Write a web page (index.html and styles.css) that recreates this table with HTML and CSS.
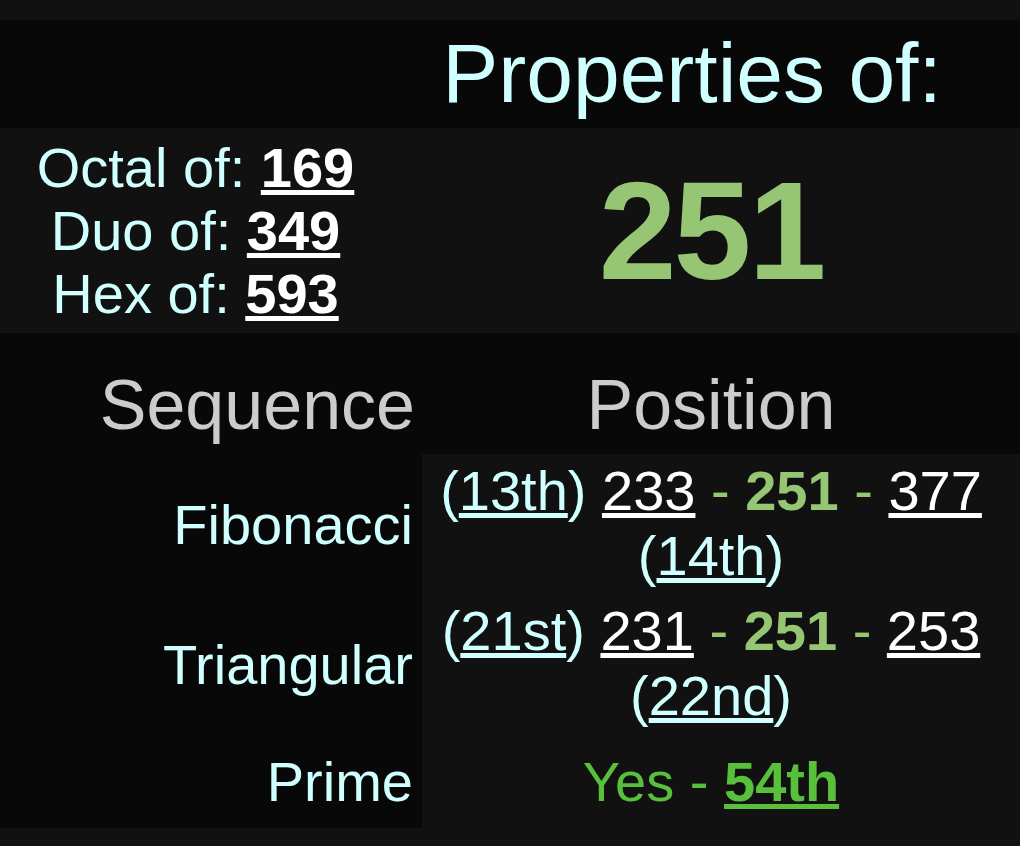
FILE: index.html
```html
<!DOCTYPE html>
<html>
<head>
<meta charset="utf-8">
<title>Properties of 251</title>
<link rel="stylesheet" href="styles.css">
</head>
<body>
<table class="props">
  <colgroup><col class="c1"><col class="c2"></colgroup>
  <tr class="title">
    <td></td>
    <td class="title-cell">Properties of:</td>
  </tr>
  <tr class="main">
    <td class="bases">Octal of: <a href="#">169</a><br>Duo of: <a href="#">349</a><br>Hex of: <a href="#">593</a></td>
    <td class="big">251</td>
  </tr>
  <tr class="head">
    <th class="seq-h">Sequence</th>
    <th class="pos-h">Position</th>
  </tr>
  <tr class="seq">
    <td class="label">Fibonacci</td>
    <td class="pos">(<a class="ord" href="#">13th</a>) <a class="n" href="#">233</a> <span class="g">- <b>251</b> -</span> <a class="n" href="#">377</a> (<a class="ord" href="#">14th</a>)</td>
  </tr>
  <tr class="seq">
    <td class="label">Triangular</td>
    <td class="pos">(<a class="ord" href="#">21st</a>) <a class="n" href="#">231</a> <span class="g">- <b>251</b> -</span> <a class="n" href="#">253</a> (<a class="ord" href="#">22nd</a>)</td>
  </tr>
  <tr class="seq prime">
    <td class="label">Prime</td>
    <td class="pos yes">Yes - <a class="yes-n" href="#">54th</a></td>
  </tr>
</table>
</body>
</html>
```
FILE: styles.css
```css
body {
  margin: 0;
  background: #111111;
  font-family: "Liberation Sans", Arial, sans-serif;
  color: #d0ffff;
}

.props {
  margin-top: 20px;
  width: 1020px;
  border-collapse: collapse;
  border-spacing: 0;
  table-layout: fixed;
}

.c1 {
  width: 422px;
}

.props td,
.props th {
  padding: 0;
  line-height: normal;
}

.props a {
  color: #ffffff;
  text-decoration: underline;
}

.title td {
  background: #080808;
  padding: 5px 0 6px;
}

.props .title-cell {
  font-size: 84px;
  text-align: center;
  padding-right: 58px;
}

.props .bases {
  font-size: 56px;
  line-height: 63px;
  text-align: center;
  vertical-align: middle;
  padding: 8px 31px 8px 0;
}

.bases a {
  font-weight: bold;
}

.props .big {
  font-size: 140px;
  font-weight: bold;
  color: #96c574;
  text-align: center;
  vertical-align: middle;
  padding-right: 20px;
  letter-spacing: -3px;
}

.head th {
  background: #080808;
  font-size: 70px;
  font-weight: normal;
  color: #cccccc;
}

.props .head th {
  padding-top: 32px;
  padding-bottom: 9px;
}

.props .seq-h {
  text-align: right;
  padding-right: 7px;
}

.props .pos-h {
  text-align: center;
  padding-right: 20px;
}

.seq td {
  font-size: 56px;
}

.props .label {
  background: #080808;
  text-align: right;
  vertical-align: middle;
  padding-right: 9px;
}

.props .pos {
  text-align: center;
  vertical-align: middle;
  padding: 4px 20px 6px 0;
}

.props a.ord {
  color: #d0ffff;
}

.g {
  color: #96c574;
}

.props .prime td {
  height: 94px;
  padding-top: 0;
  padding-bottom: 0;
}

.yes {
  color: #58c03a;
}

.props a.yes-n {
  color: #58c03a;
  font-weight: bold;
}
```
